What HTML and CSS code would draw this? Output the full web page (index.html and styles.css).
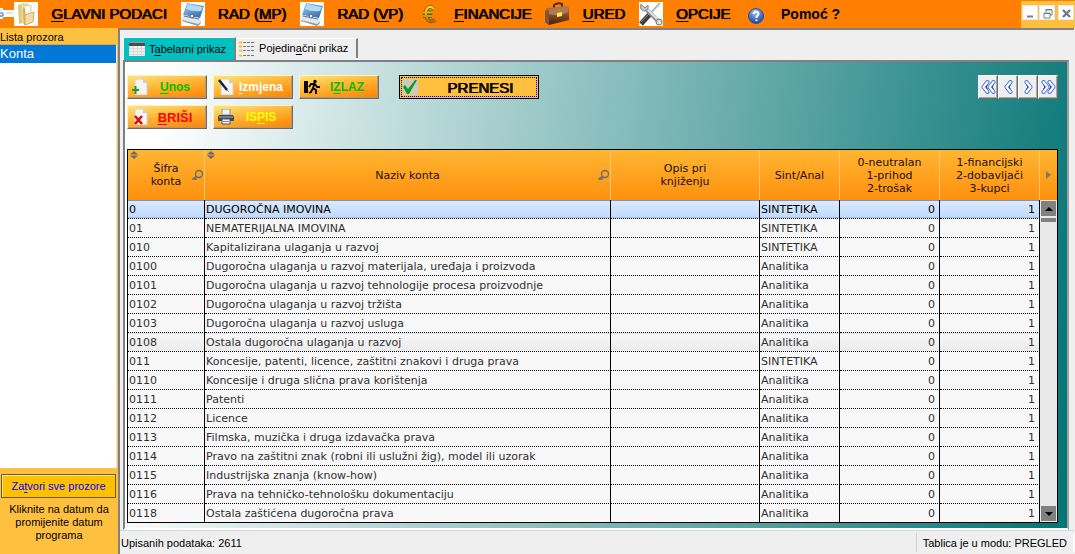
FILE: index.html
```html
<!DOCTYPE html>
<html lang="hr">
<head>
<meta charset="utf-8">
<title>Konta</title>
<link rel="stylesheet" href="styles.css">
</head>
<body>
<svg class="defs" aria-hidden="true">
  <defs>
    <linearGradient id="blueGlass" x1="0" y1="0" x2="1" y2="1"><stop offset="0" stop-color="#9cc8ec"/><stop offset="1" stop-color="#2c62a6"/></linearGradient>
    <linearGradient id="brown" x1="0" y1="0" x2="0" y2="1"><stop offset="0" stop-color="#b87848"/><stop offset="1" stop-color="#4a1c04"/></linearGradient>
    <linearGradient id="brass" x1="0" y1="0" x2="0" y2="1"><stop offset="0" stop-color="#ffe020"/><stop offset="1" stop-color="#a87808"/></linearGradient>
    <radialGradient id="ball" cx=".45" cy=".25" r=".8"><stop offset="0" stop-color="#a8c4f0"/><stop offset=".5" stop-color="#4c7cd0"/><stop offset="1" stop-color="#1c3c98"/></radialGradient>
    <symbol id="scanner" viewBox="0 0 24 24">
      <rect width="24" height="24" fill="#fff"/>
      <path d="M6 1 L23 4 L19 16 L2 13Z" fill="url(#blueGlass)"/>
      <path d="M7 2 L22 5 L20 9 Q12 10 5 7Z" fill="#b4daf2"/>
      <path d="M2 13 L19 16 L20 20 L17 22 L1 18Z" fill="#e4e7ea"/>
      <path d="M1 18 L17 22 L20 20 L20 21 L17 24 L1 19Z" fill="#8b98a6"/>
      <path d="M3 14 L18 17" stroke="#55789f"/><circle cx="11" cy="14" r="2" fill="#e8eef4" stroke="#375f92"/>
    </symbol>
    <symbol id="page" viewBox="0 0 16 16"><path d="M3 0 H11 L15 4 V16 H3Z" fill="#f5f5f5" stroke="#cfcfcf"/><path d="M11 0 V4 H15Z" fill="#ccc"/></symbol>
    <symbol id="search" viewBox="0 0 12 12"><circle cx="7" cy="5" r="3.5" fill="none" stroke="#6d6d6d" stroke-width="1.4"/><path d="M4.5 7.5 L1 10 H5" stroke="#6d6d6d" stroke-width="1.6" fill="none"/></symbol>
    <symbol id="sort" viewBox="0 0 8 8"><path d="M4 0 L8 3.5 H0Z M0 4.5 H8 L4 8Z" fill="#696969"/></symbol>
    <symbol id="chevron" viewBox="0 0 9 14">
      <path d="M6.5 2 L2.5 7 L6.5 12" fill="none" stroke="#3f6fe8" stroke-width="4" stroke-linecap="round" stroke-linejoin="round"/>
      <path d="M6.5 2 L2.5 7 L6.5 12" fill="none" stroke="#f8f8ff" stroke-width="2.2" stroke-linecap="round" stroke-linejoin="round"/>
      <path d="M6.5 5.5 L5 7 L6.5 9" fill="none" stroke="#4b4440" stroke-width="1"/>
    </symbol>
  </defs>
</svg>

<header class="menubar">
  <svg class="grip" viewBox="0 0 14 24"><path d="M0 6 H3 V8 H14 V15 H3 V17 H0Z" fill="#fff"/><path d="M0 8 H2 M0 14 H3 M6 11 H13" stroke="#c9c9d4"/><path d="M0 11 H3 V14 H0" fill="none" stroke="#4066c0"/></svg>
  <nav class="menu">
    <button class="menu-item" type="button">
      <svg class="icon-lg" viewBox="0 0 24 24"><rect width="24" height="24" fill="#fff"/><path d="M4 3 L10 1 V20 L5 22Z" fill="#e2c876"/><path d="M7 2 L14 1 V20 L8 22Z" fill="#ead9a0"/><path d="M10 4 L17 3 V20 L10 21Z" fill="#f7f7f2" stroke="#d5cda8"/><path d="M9 7 L11 6 L12 22 L10 23Z" fill="#d1ae4f"/><path d="M11 13 L20 10 L19 20 L11 23Z" fill="#f1dda1" stroke="#d2b364"/></svg>
      <span><u>G</u>LAVNI PODACI</span>
    </button>
    <button class="menu-item" type="button"><svg class="icon-lg"><use href="#scanner"/></svg><span>RAD (<u>M</u>P)</span></button>
    <button class="menu-item" type="button"><svg class="icon-lg"><use href="#scanner"/></svg><span>RAD (<u>V</u>P)</span></button>
    <button class="menu-item" type="button">
      <svg class="icon-lg" viewBox="0 0 24 24"><path d="M17 7 C12 2 8 7 9 13 C10 19 14 21 18 18 M6 10.500 H16 M6 14 H15" fill="none" stroke="#6a4a08" stroke-width="3.600"/><path d="M17 7 C12 2 8 7 9 13 C10 19 14 21 18 18 M6 10.500 H16 M6 14 H15" fill="none" stroke="url(#brass)" stroke-width="2.200"/></svg>
      <span><u>F</u>INANCIJE</span>
    </button>
    <button class="menu-item" type="button">
      <svg class="icon-lg" viewBox="0 0 24 24"><path d="M9 6 V3 Q13 0 17 2 V5" fill="none" stroke="#50280f" stroke-width="2"/><path d="M2 6 L22 4 Q24 4 24 6 V18 L4 23 L0 20 V9Z" fill="url(#brown)"/><path d="M1 8 L5 7 L23 5 V10 Q14 15 4 12Z" fill="#b27a50"/><path d="M4 8 V23 L0 20 V9Z" fill="#865432"/><path d="M12 11 L17 10 V14 L12 15Z" fill="#ffe85c"/></svg>
      <span><u>U</u>RED</span>
    </button>
    <button class="menu-item" type="button">
      <svg class="icon-lg" viewBox="0 0 24 24"><rect width="24" height="24" fill="#fff"/><path d="M21 1 L9 14" stroke="#b9b9b9" stroke-width="2"/><path d="M11 12 L2 22" stroke="#3f3f3f" stroke-width="5"/><path d="M10 12 L2 20" stroke="#8c8c8c"/><path d="M6 6 L20 20" stroke="#8e8e8e" stroke-width="4"/><path d="M6 5 L20 19" stroke="#e3e3e3" stroke-width="2"/><path d="M2 2 Q0 9 6 9 Q10 8 9 3 L6 6Z" fill="#c5c5c5" stroke="#888"/><circle cx="20" cy="20" r="3" fill="#d6d6d6" stroke="#777"/><circle cx="21" cy="21" r="1" fill="#fff"/></svg>
      <span><u>O</u>PCIJE</span>
    </button>
    <button class="menu-item menu-item-help" type="button">
      <svg class="icon-lg" viewBox="0 0 24 24"><circle cx="12" cy="14" r="7.500" fill="url(#ball)" stroke="#2a4ea4"/><path d="M9.500 12 Q10 9.500 12.500 9.800 Q15.500 10.500 14 13 L12.500 15 V16 M12.500 17.500 V19" fill="none" stroke="#fff" stroke-width="2"/></svg>
      <span>Pomoć ?</span>
    </button>
  </nav>
  <div class="window-controls">
    <button type="button" aria-label="Minimiziraj"><svg viewBox="0 0 11 11"><path d="M2 8.500 H8" stroke="#75808c" stroke-width="2"/></svg></button>
    <button type="button" aria-label="Vrati"><svg viewBox="0 0 11 11"><path d="M4 4 V2 H10 V7 H8 M2 5 H8 V10 H2Z M3.500 1.500 H10 M2 5.500 H8" fill="none" stroke="#75808c"/></svg></button>
    <button class="close" type="button" aria-label="Zatvori"><svg viewBox="0 0 11 11"><path d="M2 2 L9 9 M9 2 L2 9" stroke="#6f7c88" stroke-width="2.400"/></svg></button>
  </div>
</header>

<div class="workspace">
  <aside class="sidebar">
    <h2 class="sidebar-title">Lista prozora</h2>
    <ul class="window-list"><li class="selected">Konta</li></ul>
    <button class="close-all" type="button">Za<u>t</u>vori sve prozore</button>
    <p class="date-hint">Kliknite na datum da promijenite datum programa</p>
  </aside>

  <main class="main">
    <div class="tabs" role="tablist">
      <button class="tab active" type="button" role="tab" aria-selected="true">
        <svg class="icon-sm" viewBox="0 0 16 14"><rect width="16" height="14" fill="#f1f1f1"/><rect width="16" height="4" fill="#4d4d4d"/><path d="M0 .5 H16" stroke="#999"/><path d="M0 6.500 H16 M0 9.500 H16 M0 12.500 H16 M4.500 4 V14 M8.500 4 V14 M12.500 4 V14" stroke="#d8d8d8"/></svg>
        <span>T<u>a</u>belarni prikaz</span>
      </button>
      <button class="tab" type="button" role="tab" aria-selected="false">
        <svg class="icon-sm" viewBox="0 0 16 16"><path d="M0 1.500 H3 M0 5.500 H3 M0 9.500 H3 M0 14.500 H3" stroke="#e8c840" stroke-width="2"/><path d="M4 1.500 H16 M4 5.500 H16 M4 9.500 H16 M4 14.500 H16" stroke="#777" stroke-dasharray="3 1"/></svg>
        <span>Pojedin<u>a</u>čni prikaz</span>
      </button>
    </div>

    <section class="panel">
      <div class="toolbar">
        <div class="actions">
          <button class="action green" type="button"><svg viewBox="0 0 16 16"><use href="#page"/><path d="M3.500 7 V15 M0 11 H7" stroke="#249b20" stroke-width="2"/></svg><span><u>U</u>nos</span></button>
          <button class="action white" type="button"><svg viewBox="0 0 16 16"><use href="#page"/><path d="M1 1 L9 11" stroke="#102048" stroke-width="2.400"/><path d="M9 11 L11 13" stroke="#999"/></svg><span><u>I</u>zmjena</span></button>
          <button class="action green" type="button"><svg viewBox="0 0 16 16"><path d="M0 2 H4 V14 H0Z" fill="#000"/><circle cx="11" cy="2.500" r="1.700"/><path d="M10.500 4 L9 9 L12 11 L12 15 M9 9 L7 13 L5 14 M10 5 L7 5 L5 8 M11 5 L13 8 L16 8" fill="none" stroke="#000" stroke-width="1.800"/></svg><span>I<u>Z</u>LAZ</span></button>
          <button class="action red" type="button"><svg viewBox="0 0 16 16"><use href="#page"/><path d="M3 7 L10 15 M10 7 L3 15" stroke="#d41010" stroke-width="2.600"/></svg><span><u>B</u>RIŠI</span></button>
          <button class="action yellow" type="button"><svg viewBox="0 0 16 16"><path d="M4 0 H12 V6 H4Z" fill="#eef2fa" stroke="#899"/><path d="M1 6 H15 L16 8 V12 H0 V8Z" fill="#454a54"/><path d="M1 8 H15" stroke="#a8b0bc"/><path d="M4 10 H12 V15 H4Z" fill="#f4f4f4" stroke="#555"/><path d="M5 12.500 H11" stroke="#5b8cd4"/></svg><span>IS<u>P</u>IS</span></button>
        </div>
        <button class="transfer" type="button"><svg viewBox="0 0 16 16"><rect width="16" height="16" fill="#cbcbc4"/><path d="M1 8 L3 6 L6 10 L13 1 H15 L7 15 H5Z" fill="#159a20"/></svg><span>PRENESI</span></button>
        <div class="pager">
          <button type="button" aria-label="Prvi"><svg class="double" viewBox="0 0 15 14"><use href="#chevron" width="9" height="14"/><use href="#chevron" x="6" width="9" height="14"/></svg></button>
          <button type="button" aria-label="Prethodni"><svg viewBox="0 0 9 14"><use href="#chevron"/></svg></button>
          <button type="button" aria-label="Sljedeći"><svg class="flip" viewBox="0 0 9 14"><use href="#chevron"/></svg></button>
          <button type="button" aria-label="Zadnji"><svg class="double flip" viewBox="0 0 15 14"><use href="#chevron" width="9" height="14"/><use href="#chevron" x="6" width="9" height="14"/></svg></button>
        </div>
      </div>

      <div class="grid">
        <div class="grid-view">
          <table class="accounts">
            <colgroup><col class="col-code"><col><col class="col-desc"><col class="col-kind"><col class="col-num"><col class="col-num"></colgroup>
            <thead>
              <tr>
                <th><svg class="sort"><use href="#sort"/></svg>Šifra<br>konta<svg class="search"><use href="#search"/></svg></th>
                <th><svg class="sort"><use href="#sort"/></svg>Naziv konta<svg class="search"><use href="#search"/></svg></th>
                <th>Opis pri<br>knjiženju</th>
                <th>Sint/Anal</th>
                <th>0-neutralan<br>1-prihod<br>2-trošak</th>
                <th>1-financijski<br>2-dobavljači<br>3-kupci</th>
              </tr>
            </thead>
            <tbody>
              <tr class="selected"><td>0</td><td>DUGOROČNA IMOVINA</td><td></td><td>SINTETIKA</td><td>0</td><td>1</td></tr>
              <tr><td>01</td><td>NEMATERIJALNA IMOVINA</td><td></td><td>SINTETIKA</td><td>0</td><td>1</td></tr>
              <tr><td>010</td><td>Kapitalizirana ulaganja u razvoj</td><td></td><td>SINTETIKA</td><td>0</td><td>1</td></tr>
              <tr><td>0100</td><td>Dugoročna ulaganja u razvoj materijala, uređaja i proizvoda</td><td></td><td>Analitika</td><td>0</td><td>1</td></tr>
              <tr><td>0101</td><td>Dugoročna ulaganja u razvoj tehnologije procesa proizvodnje</td><td></td><td>Analitika</td><td>0</td><td>1</td></tr>
              <tr><td>0102</td><td>Dugoročna ulaganja u razvoj tržišta</td><td></td><td>Analitika</td><td>0</td><td>1</td></tr>
              <tr><td>0103</td><td>Dugoročna ulaganja u razvoj usluga</td><td></td><td>Analitika</td><td>0</td><td>1</td></tr>
              <tr class="hot"><td>0108</td><td>Ostala dugoročna ulaganja u razvoj</td><td></td><td>Analitika</td><td>0</td><td>1</td></tr>
              <tr><td>011</td><td>Koncesije, patenti, licence, zaštitni znakovi i druga prava</td><td></td><td>SINTETIKA</td><td>0</td><td>1</td></tr>
              <tr><td>0110</td><td>Koncesije i druga slična prava korištenja</td><td></td><td>Analitika</td><td>0</td><td>1</td></tr>
              <tr><td>0111</td><td>Patenti</td><td></td><td>Analitika</td><td>0</td><td>1</td></tr>
              <tr><td>0112</td><td>Licence</td><td></td><td>Analitika</td><td>0</td><td>1</td></tr>
              <tr><td>0113</td><td>Filmska, muzička i druga izdavačka prava</td><td></td><td>Analitika</td><td>0</td><td>1</td></tr>
              <tr><td>0114</td><td>Pravo na zaštitni znak (robni ili uslužni žig), model ili uzorak</td><td></td><td>Analitika</td><td>0</td><td>1</td></tr>
              <tr><td>0115</td><td>Industrijska znanja (know-how)</td><td></td><td>Analitika</td><td>0</td><td>1</td></tr>
              <tr><td>0116</td><td>Prava na tehničko-tehnološku dokumentaciju</td><td></td><td>Analitika</td><td>0</td><td>1</td></tr>
              <tr><td>0118</td><td>Ostala zaštićena dugoročna prava</td><td></td><td>Analitika</td><td>0</td><td>1</td></tr>
            </tbody>
          </table>
        </div>
        <div class="grid-side">
          <button class="more" type="button" aria-label="Više stupaca"><svg viewBox="0 0 6 8"><path d="M0 0 L5 4 L0 8Z" fill="#777"/></svg></button>
          <div class="scrollbar">
            <button type="button" aria-label="Gore"><svg viewBox="0 0 8 4"><path d="M4 0 L8 4 H0Z"/></svg></button>
            <div class="track"><div class="thumb"></div></div>
            <button type="button" aria-label="Dolje"><svg viewBox="0 0 8 4"><path d="M0 0 H8 L4 4Z"/></svg></button>
          </div>
        </div>
      </div>
    </section>

    <footer class="statusbar"><span>Upisanih podataka: 2611</span><span class="mode">Tablica je u modu: PREGLED</span></footer>
  </main>
</div>
</body>
</html>
```
FILE: styles.css
```css
* { box-sizing: border-box; }

html, body { height: 100%; }

body {
  margin: 0;
  display: flex;
  flex-direction: column;
  overflow: hidden;
  background: #efefef;
  color: #000;
  font: 11px/13px "Liberation Sans", Arial, sans-serif;
}

button {
  margin: 0;
  padding: 0;
  border: 0;
  color: inherit;
  font: inherit;
}

svg { display: block; flex: none; }

u { text-underline-offset: 2px; }

.defs { position: absolute; width: 0; height: 0; }

/* Menu bar */
.menubar {
  display: flex;
  height: 28px;
  flex: none;
  background: #ff8000;
}

.grip { width: 14px; height: 24px; margin-top: 2px; }

.menu { display: flex; flex: 1; gap: 14px; }

.menu-item {
  display: flex;
  align-items: center;
  gap: 13px;
  background: none;
  font-size: 15px;
  line-height: 18px;
  white-space: nowrap;
  text-shadow: 1px 0 #000;
}

.menu-item-help { font-size: 14px; font-weight: bold; text-shadow: none; }

.icon-lg { width: 24px; height: 24px; }

.window-controls {
  display: flex;
  align-items: flex-start;
  gap: 1px;
  margin-top: 1px;
  padding: 4px 1px;
  background: #ffc040;
}

.window-controls button {
  width: 16px;
  height: 15px;
  padding: 2px;
  background: #fff;
  border: 1px solid #e4e8ec;
}

.window-controls .close { margin-left: 2px; }

.window-controls svg { width: 11px; height: 11px; }

.workspace { display: flex; flex: 1; min-height: 0; }

/* Window list */
.sidebar {
  display: flex;
  flex-direction: column;
  width: 118px;
  flex: none;
  padding-top: 3px;
  background: #ffc040;
}

.sidebar-title { margin: 0; font: inherit; }

.window-list {
  flex: 1;
  margin: 0 1px 0 0;
  padding: 0;
  list-style: none;
  background: #fff;
  border-top: 1px solid #d0a860;
  border-right: 1px solid #e8e8e8;
}

.window-list .selected {
  height: 18px;
  background: #0078d7;
  color: #fff;
  font-size: 13px;
  line-height: 18px;
}

.close-all {
  height: 24px;
  margin: 6px 2px 0 1px;
  background: #ffc000;
  border: 1px solid #66583c;
  box-shadow: inset 1px 1px #ffe48c;
  color: #00f;
  white-space: nowrap;
}

.date-hint { margin: 5px 8px 12px; text-align: center; }

/* Main area */
.main {
  display: flex;
  flex-direction: column;
  flex: 1;
  min-width: 0;
  margin-right: 1px;
  border-top: 2px solid #808080;
  border-left: 2px solid #808080;
}

.tabs {
  display: flex;
  align-items: flex-end;
  padding: 8px 3px 0;
  height: 30px;
  flex: none;
}

.tab {
  display: flex;
  align-items: center;
  gap: 4px;
  height: 20px;
  margin-bottom: 2px;
  padding: 0 8px 0 3px;
  background: #efefef;
  border-top: 1px solid #fff;
  border-right: 2px solid #808080;
  white-space: nowrap;
}

.tab.active {
  height: 23px;
  margin-bottom: 0;
  padding-left: 5px;
  background: #00c0c0;
  border-left: 1px solid #fff;
}

.icon-sm { width: 16px; height: 16px; }

.panel {
  display: flex;
  flex-direction: column;
  flex: 1;
  min-height: 0;
  gap: 20px;
  margin: 0 5px 0 3px;
  padding: 13px 9px 5px 2px;
  border: 2px solid #808080;
  border-right-color: #a0a0a0;
  border-bottom-color: #fff;
  background: linear-gradient(98deg, #fff 4%, #067575 99%);
}

.toolbar { display: flex; align-items: flex-start; }

.actions {
  display: grid;
  grid-template-columns: repeat(3, 80px);
  gap: 6px;
}

.action {
  display: flex;
  align-items: center;
  height: 24px;
  padding: 0 4px;
  background: linear-gradient(170deg, #ffe070 5%, #ffb030 50%, #ff8000);
  border: 1px solid;
  border-color: #fff2c0 #6b6b6b #6b6b6b #fff2c0;
  box-shadow: inset -1px -1px #b09878;
  font-size: 12px;
  font-weight: bold;
}

.action svg, .transfer svg { width: 16px; height: 16px; }

.action span { flex: 1; text-align: center; }

.green { color: #00c000; }
.white { color: #fff; }
.yellow { color: #ff0; }
.red { color: #f00; font-size: 13px; }

.transfer {
  display: flex;
  align-items: center;
  width: 140px;
  height: 24px;
  margin-left: 20px;
  padding: 0 2px;
  background: #ffc040;
  border: 1px solid #000;
  outline: 1px dotted #000;
  outline-offset: -3px;
  font-size: 15px;
  text-shadow: 1px 0 #000;
}

.transfer span { flex: 1; padding-left: 6px; text-align: center; }

.pager { display: flex; margin-left: auto; }

.pager button {
  display: flex;
  align-items: center;
  justify-content: center;
  width: 20px;
  height: 24px;
  background: #efefef;
  border: 1px solid;
  border-color: #fff #6b6b6b #6b6b6b #fff;
  box-shadow: inset -1px -1px #a8a8a8;
}

.pager svg { width: 9px; height: 14px; }
.pager .double { width: 15px; }
.pager .flip { transform: scaleX(-1); }

/* Accounts table */
.grid {
  display: flex;
  flex: 1;
  min-height: 0;
  border: 1px solid #000;
  background: #f8f8f8;
  font-family: "DejaVu Sans", Verdana, sans-serif;
}

.grid-view { flex: 1; min-width: 0; overflow: hidden; }

.accounts {
  width: 100%;
  table-layout: fixed;
  border-collapse: separate;
  border-spacing: 0;
  color: #303030;
}

.col-code { width: 77px; }
.col-desc { width: 149px; }
.col-kind { width: 80px; }
.col-num { width: 100px; }

.accounts th {
  position: relative;
  height: 50px;
  padding: 0;
  background: linear-gradient(#ffb632, #ff900e);
  border-right: 1px solid #ffc870;
  color: #201000;
  font-weight: normal;
}

.sort { position: absolute; top: 1px; left: 2px; width: 8px; height: 8px; }
.search { position: absolute; top: 19px; right: 0; width: 12px; height: 12px; }

.accounts td {
  height: 19px;
  padding: 1px 1px 0;
  border-right: 1px solid #000;
  border-bottom: 1px dotted #000;
  line-height: 17px;
  white-space: nowrap;
}

.accounts td:nth-child(n+5) { padding-right: 4px; text-align: right; }

.accounts .selected td {
  background: linear-gradient(#dceafc, #c0dafa);
  box-shadow: inset 0 1px #7098cc, inset 0 -1px #a4c4ec;
  color: #000;
}

.accounts .hot td {
  background: linear-gradient(#f8f8f8, #ebebeb);
  box-shadow: inset 0 1px #dce4ec;
}

.grid-side { display: flex; flex-direction: column; width: 17px; flex: none; }

.more {
  display: grid;
  place-items: center;
  height: 50px;
  flex: none;
  background: linear-gradient(#ffb632, #ff900e);
}

.more svg { width: 6px; height: 8px; }

.scrollbar {
  display: flex;
  flex-direction: column;
  flex: 1;
  gap: 2px;
  padding: 1px;
  background: #e9e9e9;
}

.scrollbar button {
  display: grid;
  place-items: center;
  height: 15px;
  flex: none;
  background: #808080;
}

.scrollbar svg { width: 8px; height: 4px; }

.track { flex: 1; }
.thumb { height: 4px; background: #808080; }

/* Status bar */
.statusbar {
  display: flex;
  align-items: stretch;
  justify-content: space-between;
  height: 24px;
  flex: none;
  padding: 2px 0 2px 1px;
  border-top: 1px solid #d8d8d8;
  line-height: 20px;
}

.mode { padding: 0 6px; border-left: 1px solid #d0d0d0; border-right: 1px solid #fff; }
```
